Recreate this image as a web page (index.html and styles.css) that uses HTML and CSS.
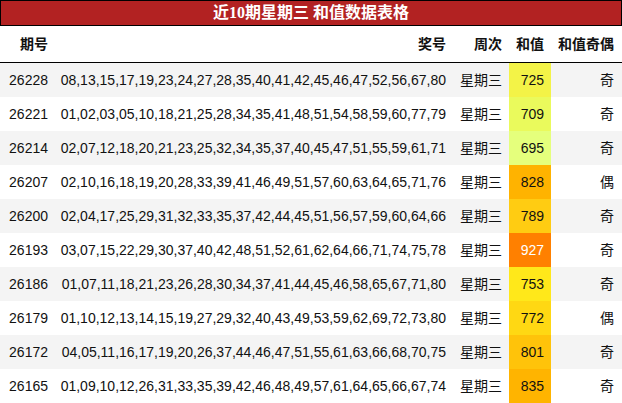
FILE: index.html
```html
<!DOCTYPE html>
<html lang="zh">
<head>
<meta charset="utf-8">
<link rel="stylesheet" href="styles.css">
</head>
<body>
<div class="title">近10期星期三 和值数据表格</div>
<table class="data">
  <colgroup>
    <col class="c-issue">
    <col class="c-nums">
    <col class="c-week">
    <col class="c-sum">
    <col class="c-odd">
  </colgroup>
  <thead>
    <tr><th>期号</th><th>奖号</th><th>周次</th><th>和值</th><th class="last">和值奇偶</th></tr>
  </thead>
  <tbody>
    <tr><td>26228</td><td>08,13,15,17,19,23,24,27,28,35,40,41,42,45,46,47,52,56,67,80</td><td>星期三</td><td class="sum" style="background:#f3f347">725</td><td class="last">奇</td></tr>
    <tr><td>26221</td><td>01,02,03,05,10,18,21,25,28,34,35,41,48,51,54,58,59,60,77,79</td><td>星期三</td><td class="sum" style="background:#eafa5c">709</td><td class="last">奇</td></tr>
    <tr><td>26214</td><td>02,07,12,18,20,21,23,25,32,34,35,37,40,45,47,51,55,59,61,71</td><td>星期三</td><td class="sum" style="background:#e5ff7c">695</td><td class="last">奇</td></tr>
    <tr><td>26207</td><td>02,10,16,18,19,20,28,33,39,41,46,49,51,57,60,63,64,65,71,76</td><td>星期三</td><td class="sum" style="background:#ffb300">828</td><td class="last">偶</td></tr>
    <tr><td>26200</td><td>02,04,17,25,29,31,32,33,35,37,42,44,45,51,56,57,59,60,64,66</td><td>星期三</td><td class="sum" style="background:#ffcc12">789</td><td class="last">奇</td></tr>
    <tr><td>26193</td><td>03,07,15,22,29,30,37,40,42,48,51,52,61,62,64,66,71,74,75,78</td><td>星期三</td><td class="sum hot" style="background:#ff8000">927</td><td class="last">奇</td></tr>
    <tr><td>26186</td><td>01,07,11,18,21,23,26,28,30,34,37,41,44,45,46,58,65,67,71,80</td><td>星期三</td><td class="sum" style="background:#ffe81a">753</td><td class="last">奇</td></tr>
    <tr><td>26179</td><td>01,10,12,13,14,15,19,27,29,32,40,43,49,53,59,62,69,72,73,80</td><td>星期三</td><td class="sum" style="background:#ffd813">772</td><td class="last">偶</td></tr>
    <tr><td>26172</td><td>04,05,11,16,17,19,20,26,37,44,46,47,51,55,61,63,66,68,70,75</td><td>星期三</td><td class="sum" style="background:#ffc30a">801</td><td class="last">奇</td></tr>
    <tr><td>26165</td><td>01,09,10,12,26,31,33,35,39,42,46,48,49,57,61,64,65,66,67,74</td><td>星期三</td><td class="sum" style="background:#ffb400">835</td><td class="last">奇</td></tr>
  </tbody>
</table>
</body>
</html>
```
FILE: styles.css
```css
html, body {
  margin: 0;
  padding: 0;
  background: #ffffff;
}
body {
  width: 622px;
  font-family: "Liberation Sans", "Noto Sans CJK SC", sans-serif;
  color: #111;
}
.title {
  box-sizing: border-box;
  height: 26px;
  border: 1px solid #000;
  background: #b22222;
  color: #ffffff;
  font-family: "Liberation Serif", "Noto Sans CJK SC", serif;
  font-weight: bold;
  font-size: 16px;
  line-height: 23px;
  text-align: center;
}
.data {
  width: 622px;
  table-layout: fixed;
  border-collapse: collapse;
  border-spacing: 0;
  font-size: 14px;
}
.c-issue { width: 55px; }
.c-nums { width: 398px; }
.c-week { width: 56px; }
.c-sum { width: 42px; }
.c-odd { width: 71px; }
.data th {
  height: 35px;
  padding: 0 7px 0 0;
  text-align: right;
  font-weight: bold;
  border-bottom: 1px solid #000;
  box-sizing: border-box;
  line-height: 16px;
}
.data thead tr { height: 36px; }
.data td {
  height: 34px;
  padding: 0 7px 0 0;
  text-align: right;
  line-height: 16px;
  white-space: nowrap;
}
.data th.last, .data td.last { padding-right: 8px; }
.data tbody tr:nth-child(odd) { background: #f4f4f4; }
.data tbody tr:nth-child(even) { background: #ffffff; }
.data td.sum { color: #111; }
.data td.sum.hot { color: #ffffff; }
```
